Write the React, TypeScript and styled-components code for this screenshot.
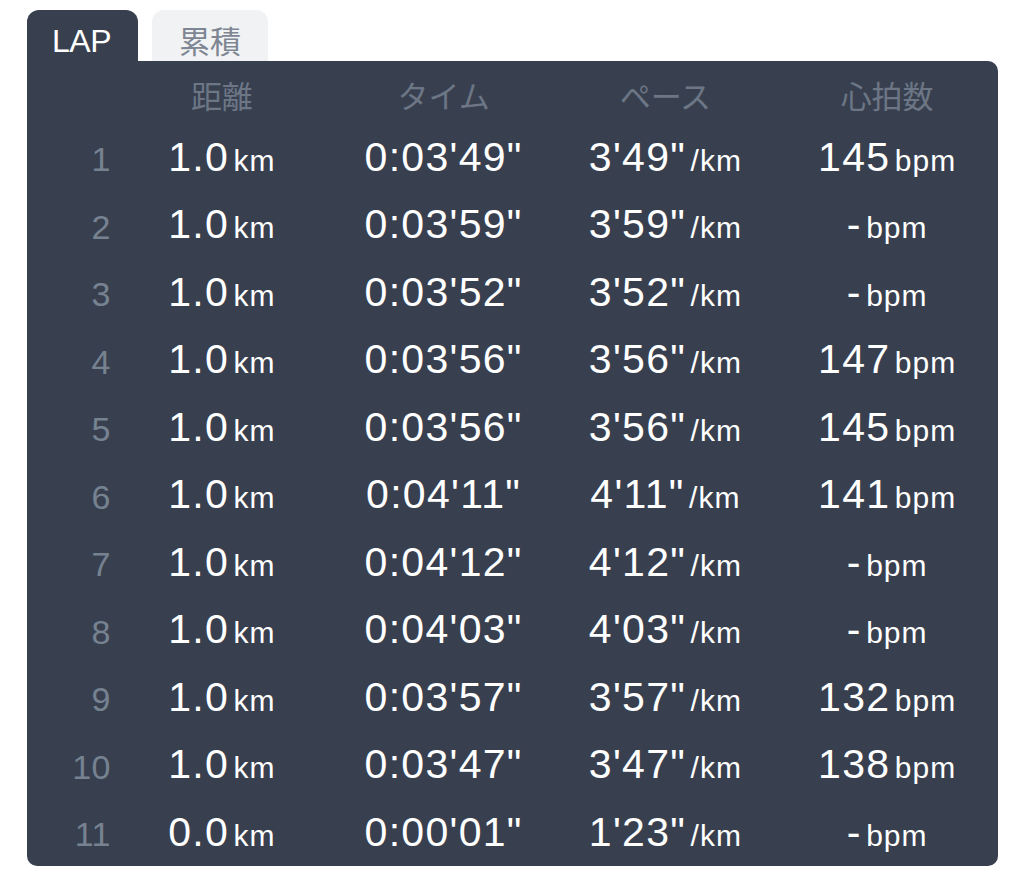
import React from "react";
import styled, { createGlobalStyle } from "styled-components";

const Global = createGlobalStyle`
  html, body { margin: 0; padding: 0; background: #ffffff; }
  body { font-family: "Liberation Sans", "Noto Sans CJK JP", Arial, sans-serif; }
`;

const Page = styled.div`
  width: 1024px;
  height: 872px;
  padding: 10px 0 0 27px;
  box-sizing: border-box;
  display: flex;
  flex-direction: column;
`;

const Tabs = styled.div`
  display: flex;
  gap: 14px;
  height: 51px;
`;

const Tab = styled.div<{ $active?: boolean }>`
  box-sizing: border-box;
  height: 51px;
  width: ${(p) => (p.$active ? "111px" : "116px")};
  border-radius: 12px 12px 0 0;
  background: ${(p) => (p.$active ? "#384050" : "#f1f2f4")};
  color: ${(p) => (p.$active ? "#ffffff" : "#7d8692")};
  font-family: ${(p) =>
    p.$active
      ? `"Liberation Sans", Arial, sans-serif`
      : `"Noto Sans CJK JP", "Liberation Sans", sans-serif`};
  font-size: ${(p) => (p.$active ? "32px" : "31px")};
  line-height: 32px;
  padding-top: ${(p) => (p.$active ? "15px" : "14px")};
  padding-left: ${(p) => (p.$active ? "25px" : "0")};
  text-align: ${(p) => (p.$active ? "left" : "center")};
  letter-spacing: ${(p) => (p.$active ? "-0.5px" : "0")};
`;

const Panel = styled.div`
  width: 971px;
  height: 805px;
  background: #384050;
  border-radius: 0 10px 10px 10px;
  display: flex;
  flex-direction: column;
`;

const Grid = styled.div<{ $head?: boolean }>`
  display: grid;
  grid-template-columns: 84px repeat(4, 1fr);
  height: ${(p) => (p.$head ? "64px" : "67.5px")};
  align-items: ${(p) => (p.$head ? "start" : "center")};
`;

const HeadCell = styled.div`
  font-family: "Noto Sans CJK JP", "Liberation Sans", sans-serif;
  font-size: 31px;
  line-height: 32px;
  padding-top: 18px;
  color: #6c7685;
  text-align: center;
`;

const Num = styled.div`
  font-family: "Liberation Sans", Arial, sans-serif;
  font-size: 34px;
  letter-spacing: 0.5px;
  line-height: 67.5px;
  color: #778291;
  text-align: right;
  padding-top: 0;
  margin-top: -3px;
`;

const Value = styled.div`
  font-family: "Liberation Sans", Arial, sans-serif;
  color: #ffffff;
  text-align: center;
  line-height: 67.5px;
  white-space: nowrap;
`;

const Big = styled.span`
  font-size: 41px;
  letter-spacing: 1.3px;
`;

const Unit = styled.span`
  font-size: 30px;
  letter-spacing: 1px;
`;

type Lap = [number, string, string, string, string];

const laps: Lap[] = [
  [1, "1.0", `0:03'49"`, `3'49"`, "145"],
  [2, "1.0", `0:03'59"`, `3'59"`, "-"],
  [3, "1.0", `0:03'52"`, `3'52"`, "-"],
  [4, "1.0", `0:03'56"`, `3'56"`, "147"],
  [5, "1.0", `0:03'56"`, `3'56"`, "145"],
  [6, "1.0", `0:04'11"`, `4'11"`, "141"],
  [7, "1.0", `0:04'12"`, `4'12"`, "-"],
  [8, "1.0", `0:04'03"`, `4'03"`, "-"],
  [9, "1.0", `0:03'57"`, `3'57"`, "132"],
  [10, "1.0", `0:03'47"`, `3'47"`, "138"],
  [11, "0.0", `0:00'01"`, `1'23"`, "-"],
];

export default function App() {
  return (
    <>
      <Global />
      <Page>
        <Tabs>
          <Tab $active>LAP</Tab>
          <Tab>累積</Tab>
        </Tabs>
        <Panel>
          <Grid $head>
            <div />
            <HeadCell>距離</HeadCell>
            <HeadCell>タイム</HeadCell>
            <HeadCell>ペース</HeadCell>
            <HeadCell>心拍数</HeadCell>
          </Grid>
          {laps.map(([n, dist, time, pace, hr]) => (
            <Grid key={n}>
              <Num>{n}</Num>
              <Value>
                <Big>{dist}</Big> <Unit>km</Unit>
              </Value>
              <Value>
                <Big>{time}</Big>
              </Value>
              <Value>
                <Big>{pace}</Big> <Unit>/km</Unit>
              </Value>
              <Value>
                <Big>{hr}</Big> <Unit>bpm</Unit>
              </Value>
            </Grid>
          ))}
        </Panel>
      </Page>
    </>
  );
}
